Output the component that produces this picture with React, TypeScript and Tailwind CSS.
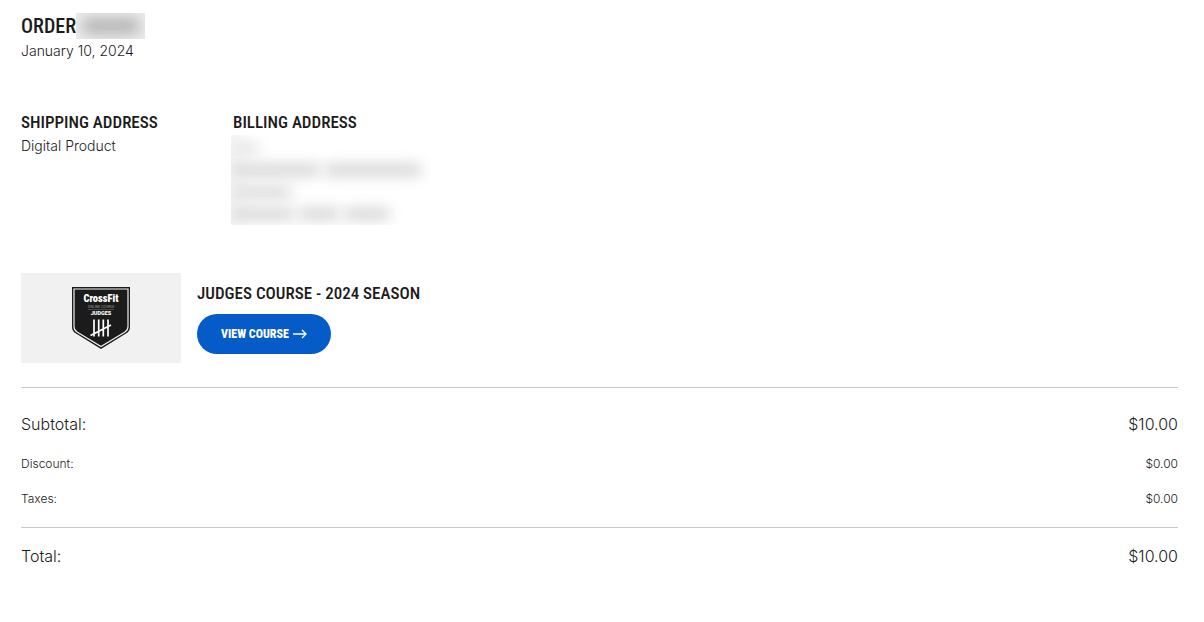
interface Charge {
  label: string;
  amount: string;
}

const charges: Charge[] = [
  { label: "Discount:", amount: "$0.00" },
  { label: "Taxes:", amount: "$0.00" },
];

const headingFont =
  "font-['Roboto_Condensed','Liberation_Sans_Narrow','DejaVu_Sans_Condensed',sans-serif]";

function JudgesBadge() {
  return (
    <svg viewBox="0 0 58 62" className="h-[62px] w-[58px]" role="img" aria-label="CrossFit Judges">
      <path d="M0 0H58V40Q58 44 54 46.500L29 62L4 46.500Q0 44 0 40Z" fill="#1b1b1b" />
      <path
        d="M2 2H56V39.500Q56 43 53 45L29 59.500L5 45Q2 43 2 39.500Z"
        fill="none"
        stroke="#f1f1f1"
        strokeWidth="1.200"
      />
      <text
        x="29"
        y="15"
        textAnchor="middle"
        fontSize="10.500"
        fontWeight="900"
        fill="#fff"
        className="font-['Roboto_Condensed',sans-serif]"
      >
        CrossFit
      </text>
      <text
        x="29"
        y="21"
        textAnchor="middle"
        fontSize="3.500"
        fill="#999"
        className="font-['Roboto',sans-serif]"
      >
        ONLINE COURSE
      </text>
      <path d="M16 22.500H42" stroke="#777" strokeWidth="0.500" />
      <text
        x="29"
        y="27.500"
        textAnchor="middle"
        fontSize="5.500"
        fontWeight="900"
        fill="#fff"
        className="font-['Roboto',sans-serif]"
      >
        JUDGES
      </text>
      <path
        d="M22 32.500V49.500M26.700 32.500V49.500M31.300 32.500V49.500M36 32.500V49.500M18.500 48.500L39 38"
        stroke="#fff"
        strokeWidth="1.700"
        fill="none"
      />
    </svg>
  );
}

function ArrowIcon() {
  return (
    <svg viewBox="0 0 14 10" className="h-[10px] w-[14px]" fill="none" stroke="currentColor" strokeWidth="1.300" aria-hidden="true">
      <path d="M0 5H13M9 1L13 5L9 9" />
    </svg>
  );
}

function HiddenOrderNumber() {
  return (
    <span aria-hidden="true" className="flex h-[26px] w-[69px] items-center justify-center overflow-hidden bg-[#ededed]">
      <span className="h-4 w-[56px] bg-[#b4b4b4] blur-[7px]" />
    </span>
  );
}

function HiddenAddress() {
  return (
    <div aria-hidden="true" className="-ml-0.5 h-[90px] w-[200px] overflow-hidden bg-gradient-to-r from-[#f7f7f7] to-white to-10% pt-0.5">
      <div className="flex h-[22px] items-center">
        <span className="h-2.5 w-7 bg-[#e0e0e0] blur-[7px]" />
      </div>
      <div className="flex h-[22px] items-center gap-1.5">
        <span className="h-3 w-[88px] bg-[#d4d4d4] blur-[7px]" />
        <span className="h-3 w-[96px] bg-[#d4d4d4] blur-[7px]" />
      </div>
      <div className="flex h-[22px] items-center">
        <span className="h-3 w-[60px] bg-[#d9d9d9] blur-[7px]" />
      </div>
      <div className="flex h-[22px] items-center gap-1.5">
        <span className="h-3 w-[62px] bg-[#d4d4d4] blur-[7px]" />
        <span className="h-3 w-[40px] bg-[#d4d4d4] blur-[7px]" />
        <span className="h-3 w-[44px] bg-[#d4d4d4] blur-[7px]" />
      </div>
    </div>
  );
}

export default function App() {
  return (
    <main className="min-h-screen bg-white pt-[13px] pr-[26px] pb-10 pl-[21px] font-['Inter',sans-serif] text-[#1b1b1b]">
      <header>
        <div className="flex items-center">
          <h1 className={`${headingFont} text-xl leading-[26px] font-medium uppercase`}>
            Order
          </h1>
          <HiddenOrderNumber />
        </div>
        <p className="mt-0.5 text-sm leading-5 font-light">January 10, 2024</p>
      </header>

      <div className="mt-12 flex">
        <section className="w-[212px]">
          <h2 className={`${headingFont} text-[17px] leading-[26px] font-medium uppercase`}>
            Shipping Address
          </h2>
          <p className="text-sm leading-[22px] font-light">Digital Product</p>
        </section>
        <section>
          <h2 className={`${headingFont} text-[17px] leading-[26px] font-medium uppercase`}>
            Billing Address
          </h2>
          <HiddenAddress />
        </section>
      </div>

      <article className="mt-12 flex items-center gap-4">
        <div className="flex h-[90px] w-40 items-center justify-center bg-[#f1f1f1]">
          <JudgesBadge />
        </div>
        <div>
          <h3 className={`${headingFont} text-[17px] leading-[22px] font-medium uppercase`}>
            Judges Course - 2024 Season
          </h3>
          <a
            href="#course"
            className={`${headingFont} mt-2.5 inline-flex h-10 items-center gap-1 rounded-full bg-[#055cc8] px-6 text-xs font-extrabold text-white uppercase`}
          >
            View Course
            <ArrowIcon />
          </a>
        </div>
      </article>

      <dl className="mt-6 border-t border-[#c9c9c9] font-light">
        <div className="flex justify-between pt-6 leading-6">
          <dt>Subtotal:</dt>
          <dd>$10.00</dd>
        </div>
        <div className="flex flex-col gap-[19px] py-5">
          {charges.map((charge) => (
            <div key={charge.label} className="flex justify-between text-xs leading-4">
              <dt>{charge.label}</dt>
              <dd>{charge.amount}</dd>
            </div>
          ))}
        </div>
        <div className="flex justify-between border-t border-[#c9c9c9] pt-4 leading-6">
          <dt>Total:</dt>
          <dd>$10.00</dd>
        </div>
      </dl>
    </main>
  );
}
